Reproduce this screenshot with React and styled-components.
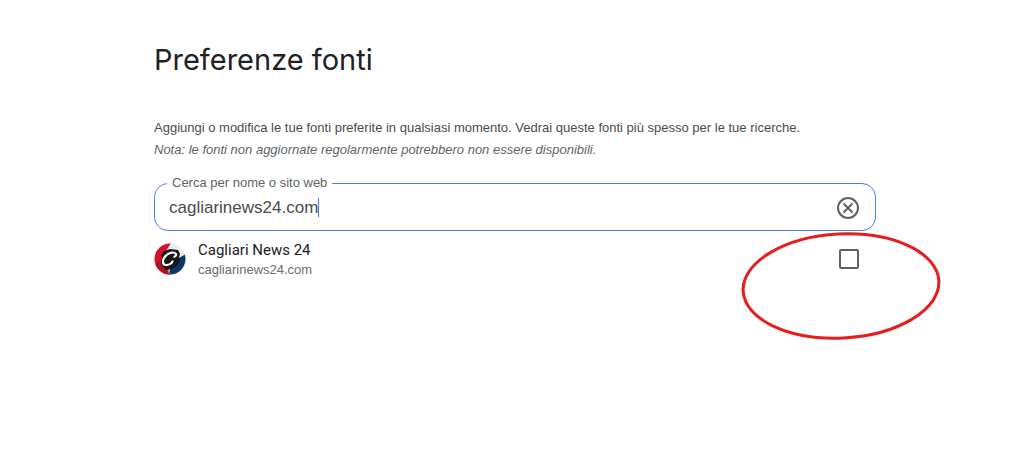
import { useRef, useState } from 'react';
import styled, { createGlobalStyle } from 'styled-components';

const GlobalStyle = createGlobalStyle`
  * {
    box-sizing: border-box;
  }

  body {
    margin: 0;
    background: #fff;
    color: #4a4c4b;
    font-family: 'Liberation Sans', Arial, sans-serif;
    font-size: 13px;
  }
`;

const Page = styled.main`
  min-height: 100vh;
  padding: 40px 148px 40px 154px;
`;

const Title = styled.h1`
  margin: 0 0 37px;
  color: #202124;
  font-family: Inter, sans-serif;
  font-size: 29px;
  font-weight: 400;
  line-height: 40px;
`;

const Intro = styled.p`
  margin: 0;
  line-height: 22px;
`;

const Note = styled(Intro)`
  color: #5f6368;
  font-style: italic;
`;

const SearchField = styled.fieldset`
  display: flex;
  align-items: center;
  height: 56px;
  min-width: 0;
  margin: 14px 0 0;
  padding: 0 15px 6px 12px;
  border: 1px solid #4a80dc;
  border-radius: 14px;
`;

const Legend = styled.legend`
  padding: 0 5px;
  color: #5f6368;
  line-height: 16px;
`;

const SearchRow = styled.div`
  display: flex;
  align-items: center;
  justify-content: space-between;
  flex: 1;
  padding-left: 2px;
`;

const TextArea = styled.div`
  display: flex;
  align-items: center;
  height: 20px;
`;

const SearchInput = styled.input`
  field-sizing: content;
  padding: 0;
  border: 0;
  outline: 0;
  background: transparent;
  color: #4a4c4b;
  caret-color: transparent;
  font-family: inherit;
  font-size: 17px;
  line-height: 20px;
`;

const Caret = styled.span`
  width: 1px;
  height: 19px;
  background: #4a80dc;
`;

const ClearButton = styled.button`
  display: flex;
  padding: 0;
  border: 0;
  background: none;
  color: #5f6160;
  cursor: pointer;
`;

const Result = styled.div`
  position: relative;
  display: flex;
  align-items: center;
  gap: 12px;
  margin-top: 8px;
`;

const ResultLabel = styled.label`
  display: flex;
  flex-direction: column;
  flex: 1;
`;

const SiteName = styled.span`
  color: #202124;
  font-family: Roboto, sans-serif;
  font-size: 15px;
  line-height: 22px;
`;

const SiteUrl = styled.span`
  color: #6b6d6c;
  line-height: 18px;
`;

const Checkbox = styled.input`
  appearance: none;
  width: 20px;
  height: 20px;
  margin: 0 17px 0 0;
  border: 2px solid #5f6160;
  border-radius: 2px;
  background: ${({ checked }) => (checked ? '#4a80dc' : '#fff')};
`;

const Highlight = styled.svg`
  position: absolute;
  top: -8px;
  right: -66px;
  pointer-events: none;
`;

const ClearIcon = () => (
  <svg width="24" height="24" viewBox="0 0 24 24" fill="none" stroke="currentColor" strokeWidth="2" aria-hidden="true">
    <circle cx="12" cy="12" r="10" />
    <path d="M7.500 7.500l9 9M16.500 7.500l-9 9" />
  </svg>
);

const SiteLogo = () => (
  <svg width="32" height="32" viewBox="0 0 32 32" aria-hidden="true">
    <clipPath id="disc">
      <circle cx="16" cy="16" r="15.5" />
    </clipPath>
    <g clipPath="url(#disc)">
      <path fill="#e9eef2" d="M0 0h32v32H0z" />
      <path fill="#d2142b" d="M0 0h17l-5 8 3 24H0z" />
      <path fill="#b5121f" d="M0 22l8-5 3 9 5 6H7z" />
      <path fill="#0d3768" d="M23 16l9-5v21H15l1-7 7-3z" />
      <path fill="#191719" d="M10 8l6-2 8 1 2 4-1 3 1 4-3 5-6 3-5 1-4-4-1-4 1-4-1-3z" />
    </g>
    <path
      d="M22 11c-2-3-8-1-11 2.500-3 4-2.500 8 .5 8.500 3 .3 6-1.500 7-3.500M22 11c.3 1.200-.6 2.400-1.600 2.800"
      fill="none"
      stroke="#fff"
      strokeWidth="2.200"
      strokeLinecap="round"
    />
  </svg>
);

const App = () => {
  const [query, setQuery] = useState('cagliarinews24.com');
  const [selected, setSelected] = useState(false);
  const inputRef = useRef(null);

  const clear = () => {
    setQuery('');
    inputRef.current.focus();
  };

  return (
    <>
      <GlobalStyle />
      <Page>
        <Title>Preferenze fonti</Title>
        <Intro>
          Aggiungi o modifica le tue fonti preferite in qualsiasi momento. Vedrai queste fonti più spesso per le tue
          ricerche.
        </Intro>
        <Note>Nota: le fonti non aggiornate regolarmente potrebbero non essere disponibili.</Note>

        <SearchField>
          <Legend>
            <label htmlFor="source">Cerca per nome o sito web</label>
          </Legend>
          <SearchRow>
            <TextArea>
              <SearchInput
                id="source"
                ref={inputRef}
                type="text"
                value={query}
                onChange={(e) => setQuery(e.target.value)}
              />
              <Caret />
            </TextArea>
            <ClearButton type="button" aria-label="Cancella" onClick={clear}>
              <ClearIcon />
            </ClearButton>
          </SearchRow>
        </SearchField>

        <Result>
          <SiteLogo />
          <ResultLabel htmlFor="site">
            <SiteName>Cagliari News 24</SiteName>
            <SiteUrl>cagliarinews24.com</SiteUrl>
          </ResultLabel>
          <Checkbox id="site" type="checkbox" checked={selected} onChange={(e) => setSelected(e.target.checked)} />
          <Highlight width="202" height="110" viewBox="0 0 202 110" aria-hidden="true">
            <ellipse
              cx="101"
              cy="55"
              rx="98"
              ry="52"
              fill="none"
              stroke="#e81c1c"
              strokeWidth="3"
              transform="rotate(-3 101 55)"
            />
          </Highlight>
        </Result>
      </Page>
    </>
  );
};

export default App;
